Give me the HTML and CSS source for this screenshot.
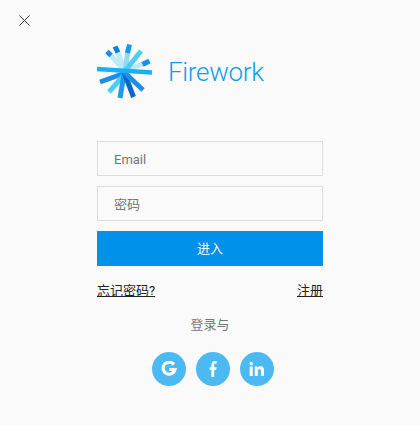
FILE: index.html
```html
<!DOCTYPE html>
<html lang="zh">
<head>
<meta charset="utf-8">
<title>Firework</title>
<link rel="stylesheet" href="styles.css">
</head>
<body>
<button class="close" type="button" aria-label="关闭">
  <svg width="11" height="11" viewBox="0 0 11 11"><path d="M.5.5l10 10M10.500.5l-10 10" stroke="#222" stroke-width=".9" fill="none"/></svg>
</button>
<main class="panel">
  <div class="brand">
    <svg class="mark" width="58" height="58" viewBox="0 0 58 58" fill="none">
      <g stroke-width="5">
        <path d="M28 29L12 11.500" stroke="#bde9fb"/>
        <path d="M28 29L19.500 7.500" stroke="#bde9fb"/>
        <path d="M28 29L49 20.500" stroke="#bde9fb"/>
        <path d="M28 29L31.500 6" stroke="#8ddcfa"/>
        <path d="M10 9.500L14 13.500" stroke="#1b8fe6"/>
        <path d="M18 4.500L21 10.500" stroke="#0f7fdc"/>
        <path d="M32.500 2.500L30.500 11" stroke="#2196e8"/>
        <path d="M52.500 19L45.500 22.500" stroke="#1b8fe6"/>
        <path d="M28 29L44 9" stroke="#4fcdf8"/>
        <path d="M28 31L3 40" stroke="#1b8fe6"/>
        <path d="M29 31L12 50" stroke="#4fcdf8"/>
        <path d="M27 32L23 56" stroke="#1a9be9"/>
        <path d="M27 30L36.500 55" stroke="#0b66c9"/>
        <path d="M27 30L46 48" stroke="#1b8fe6"/>
      </g>
      <path d="M0 27L55 30.500" stroke="#16b2f5" stroke-width="4.500"/>
    </svg>
    <span class="brand-name">Firework</span>
  </div>
  <form class="form">
    <input class="field" type="text" placeholder="Email">
    <input class="field" type="password" placeholder="密码">
    <button class="submit" type="button">进入</button>
    <div class="links">
      <a href="#">忘记密码?</a>
      <a href="#">注册</a>
    </div>
  </form>
  <p class="alt">登录与</p>
  <div class="social">
    <a class="circle" href="#" aria-label="Google">
      <svg width="16" height="16" viewBox="0 0 14 14" fill="none"><path d="M11.300 3A5.300 5.300 0 1 0 12.300 7.500H7.300" stroke="#fff" stroke-width="2.700"/></svg>
    </a>
    <a class="circle" href="#" aria-label="Facebook">
      <svg width="16" height="16" viewBox="0 0 16 16"><path d="M6.400 16V9H4.600V6.200h1.800V4.600C6.400 2 7.800 0 10 0c.8 0 1.500.1 1.700.1v2.500h-1.200c-1 0-1.300.5-1.300 1.200v2.400h2.400L11.300 9H9.200v7z" fill="#fff"/></svg>
    </a>
    <a class="circle" href="#" aria-label="LinkedIn">
      <svg width="16" height="16" viewBox="0 0 16 16"><path d="M.7 5.500h3v9.500h-3zM2.200 1a1.700 1.700 0 1 1 0 3.400 1.700 1.700 0 0 1 0-3.400zM5.800 5.500h2.800v1.300c.5-.9 1.500-1.500 2.900-1.500 2.800 0 3.500 1.800 3.500 4.300V15h-3v-4.800c0-1.200-.2-2.300-1.500-2.300s-1.700 1-1.700 2.200V15h-3z" fill="#fff"/></svg>
    </a>
  </div>
</main>
</body>
</html>
```
FILE: styles.css
```css
* {
  box-sizing: border-box;
}

html,
body {
  height: 100%;
}

body {
  margin: 0;
  background: #fafafa;
  font-family: Roboto, "Noto Sans CJK SC", sans-serif;
  font-size: 13px;
  color: #757575;
  overflow: hidden;
}

.close {
  position: absolute;
  top: 15px;
  left: 19px;
  display: block;
  width: 11px;
  height: 11px;
  padding: 0;
  border: 0;
  background: none;
}

.close svg {
  display: block;
}

.panel {
  width: 226px;
  margin: 0 auto;
  padding-top: 42px;
}

.brand {
  display: flex;
  align-items: center;
  height: 58px;
  gap: 14px;
}

.mark {
  flex: none;
}

.brand-name {
  margin-left: -1px;
  padding-top: 2px;
  font-family: Roboto, sans-serif;
  font-weight: 300;
  font-size: 26px;
  letter-spacing: -0.3px;
  color: #0e9cee;
}

.form {
  display: flex;
  flex-direction: column;
  gap: 10px;
  margin-top: 41px;
}

.field {
  display: block;
  width: 100%;
  height: 35px;
  padding: 1px 16px 0;
  border: 1px solid #dcdcdc;
  border-radius: 0;
  outline: 0;
  background: transparent;
  font: inherit;
  color: #333;
}

.field::placeholder {
  color: #757575;
  opacity: 1;
}

.submit {
  height: 35px;
  padding: 0 0 2px;
  border: 0;
  background: #0091ea;
  font: inherit;
  color: #fff;
}

.links {
  display: flex;
  justify-content: space-between;
  margin-top: 6px;
  line-height: 18px;
}

.links a {
  color: #212121;
  text-decoration: underline;
}

.alt {
  margin: 16px 0 0;
  line-height: 18px;
  text-align: center;
}

.social {
  display: flex;
  justify-content: center;
  gap: 10px;
  margin-top: 18px;
  padding-left: 6px;
}

.circle {
  display: flex;
  align-items: center;
  justify-content: center;
  width: 34px;
  height: 34px;
  border-radius: 50%;
  background: #4db9f3;
}
```
